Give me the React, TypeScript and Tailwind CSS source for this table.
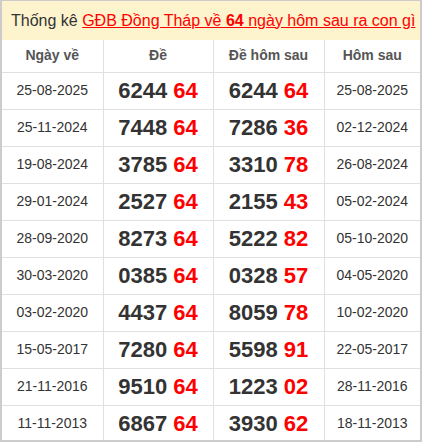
import React from "react";

const ROWS = [
  ["25-08-2025", "6244", "64", "6244", "64", "25-08-2025"],
  ["25-11-2024", "7448", "64", "7286", "36", "02-12-2024"],
  ["19-08-2024", "3785", "64", "3310", "78", "26-08-2024"],
  ["29-01-2024", "2527", "64", "2155", "43", "05-02-2024"],
  ["28-09-2020", "8273", "64", "5222", "82", "05-10-2020"],
  ["30-03-2020", "0385", "64", "0328", "57", "04-05-2020"],
  ["03-02-2020", "4437", "64", "8059", "78", "10-02-2020"],
  ["15-05-2017", "7280", "64", "5598", "91", "22-05-2017"],
  ["21-11-2016", "9510", "64", "1223", "02", "28-11-2016"],
  ["11-11-2013", "6867", "64", "3930", "62", "18-11-2013"],
];

const cell = "border border-[#e0e0e0] text-center";

export default function App() {
  return (
    <div className="w-[422px] h-[442px] overflow-hidden bg-white border-x-2 border-t border-b-2 border-[#cccccc] font-['Liberation_Sans',Arial,sans-serif]">
      <div className="h-[39px] bg-[#fdf3cd] flex items-center pl-[9px] text-[16px] text-[#333] whitespace-nowrap">
        Thống kê&nbsp;
        <a className="text-[#ff0000] underline">
          GĐB Đồng Tháp về <b>64</b> ngày hôm sau ra con gì
        </a>
      </div>
      <table className="w-full border-collapse table-fixed">
        <colgroup>
          <col className="w-[101px]" />
          <col className="w-[110px]" />
          <col className="w-[111px]" />
          <col />
        </colgroup>
        <thead>
          <tr className="h-[32px] text-[14px] font-bold text-[#555]">
            <th className={`${cell} border-t-0 border-l-0`}>Ngày về</th>
            <th className={`${cell} border-t-0`}>Đề</th>
            <th className={`${cell} border-t-0`}>Đề hôm sau</th>
            <th className={`${cell} border-t-0 border-r-0`}>Hôm sau</th>
          </tr>
        </thead>
        <tbody>
          {ROWS.map((r) => (
            <tr key={r[0]} className="h-[37px]">
              <td className={`${cell} border-l-0 text-[14px] text-[#333]`}>{r[0]}</td>
              <td className={`${cell} text-[22px] font-bold text-[#333]`}>
                {r[1]} <span className="text-[#ff0000]">{r[2]}</span>
              </td>
              <td className={`${cell} text-[22px] font-bold text-[#333]`}>
                {r[3]} <span className="text-[#ff0000]">{r[4]}</span>
              </td>
              <td className={`${cell} border-r-0 text-[14px] text-[#333]`}>{r[5]}</td>
            </tr>
          ))}
        </tbody>
      </table>
    </div>
  );
}
